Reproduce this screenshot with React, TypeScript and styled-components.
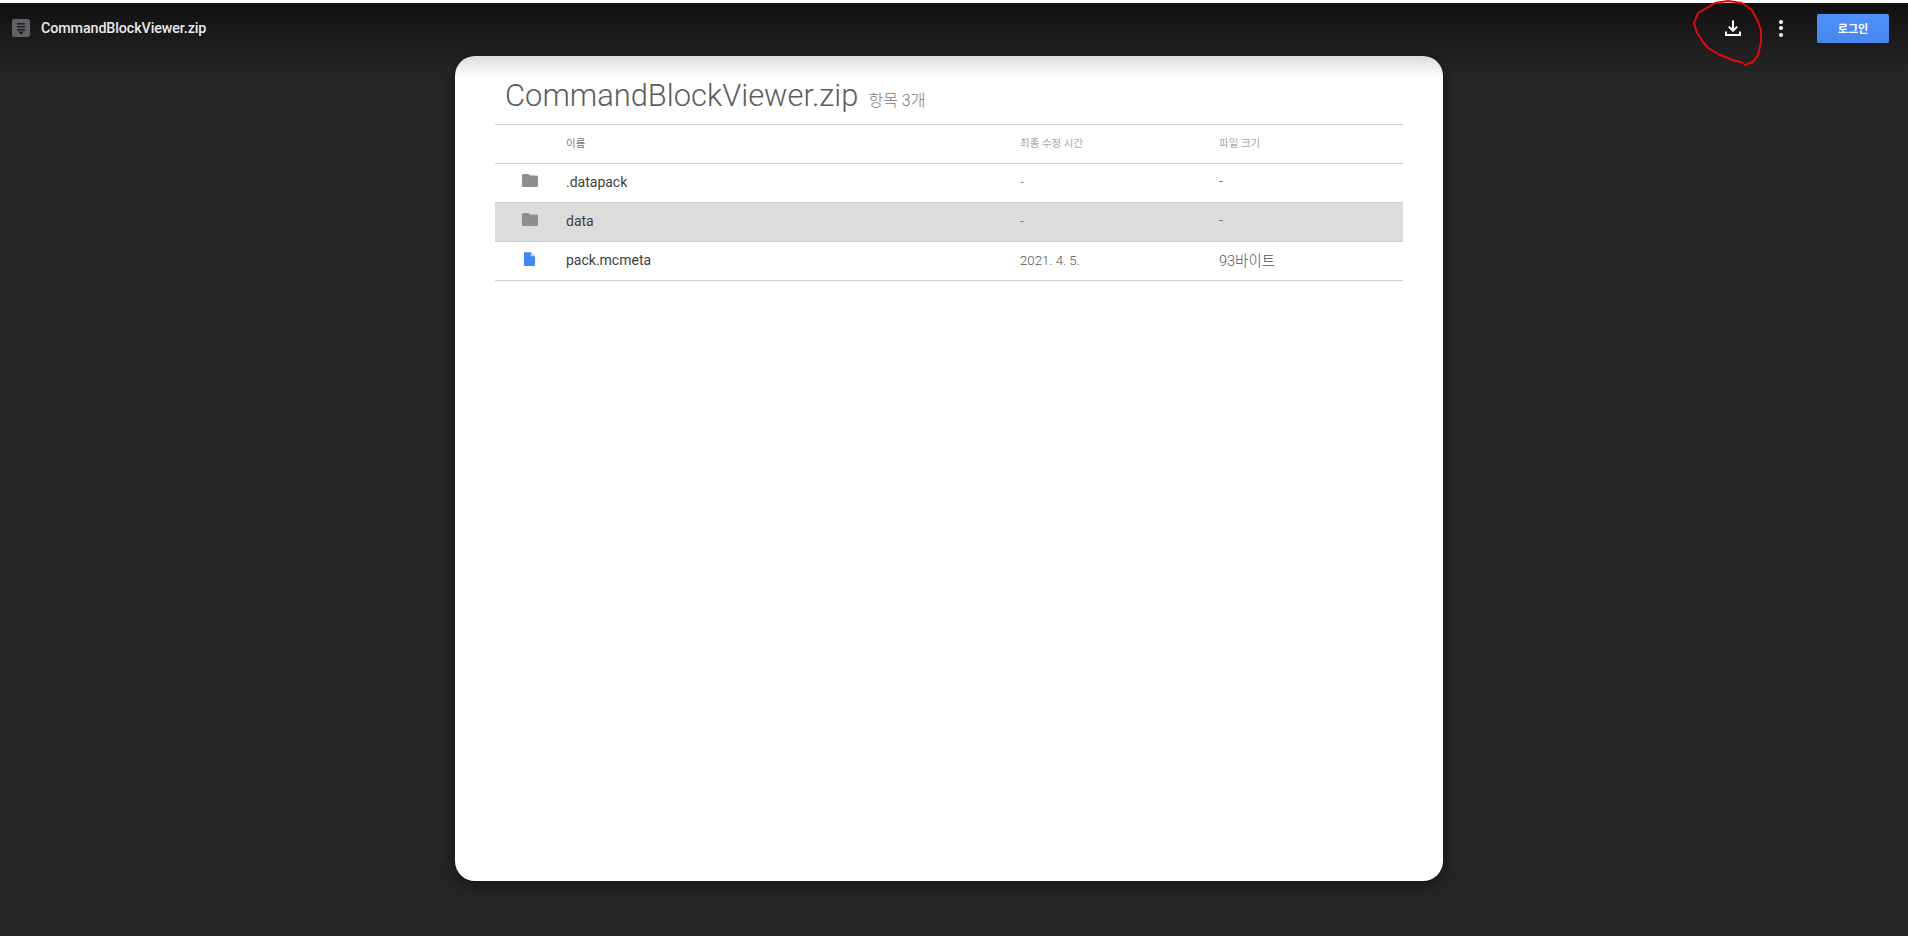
import styled, { createGlobalStyle } from 'styled-components';

const GlobalStyle = createGlobalStyle`
  html, body {
    margin: 0;
    padding: 0;
    height: 100%;
    background: #262626;
    overflow: hidden;
  }
`;

const FONT = `Roboto, "Noto Sans CJK KR", sans-serif`;

const FILES = [
  { name: '.datapack', kind: 'folder', modified: '-', size: '-' },
  { name: 'data', kind: 'folder', modified: '-', size: '-', selected: true },
  { name: 'pack.mcmeta', kind: 'file', modified: '2021. 4. 5.', size: '93바이트' },
];

const App = () => {
  return (
    <>
      <GlobalStyle />
      <Page>
        <TopStrip />
        <Toolbar>
          <ZipIcon viewBox="0 0 18 18">
            <rect width="18" height="18" rx="2.500" fill="#5f6368" />
            <path d="M5 4h8v1.600H5zM5 7h8v1.600H5zM5 10h8v1.600H5zM6 12.600h6L9 15.400z" fill="#1d1d1d" />
          </ZipIcon>
          <ArchiveName>CommandBlockViewer.zip</ArchiveName>
          <Actions>
            <IconButton aria-label="download">
              <svg width="18" height="18" viewBox="0 0 18 18" fill="none">
                <path d="M9 1.500v10M4.800 7.600 9 11.800l4.200-4.200M2 12.500v3.500h14v-3.500" stroke="#fff" strokeWidth="2" />
              </svg>
            </IconButton>
            <MoreButton aria-label="more">
              <Dot />
              <Dot />
              <Dot />
            </MoreButton>
            <LoginButton>로그인</LoginButton>
          </Actions>
          <Scribble viewBox="0 0 248 80" fill="none">
            <path
              d="M82.700 62.700 L73 60 L60 55 L48 48 L43 42 L40 37 L37 33 L34 23 L38 13 L45 9 L55 3 L68 1 L82 3 L92 10 L98 22 L101 30 L101 42 L98 55 L93 62 L85 65"
              stroke="#e60808"
              strokeWidth="2"
              strokeLinecap="round"
              strokeLinejoin="round"
            />
          </Scribble>
        </Toolbar>
        <CardArea>
          <Card>
            <TitleRow>
              <Title>CommandBlockViewer.zip</Title>
              <ItemCount>항목 3개</ItemCount>
            </TitleRow>
            <FileTable>
              <HeadRow>
                <IconCell />
                <NameCell>이름</NameCell>
                <DateCell>최종 수정 시간</DateCell>
                <SizeCell>파일 크기</SizeCell>
              </HeadRow>
              {FILES.map((file) => (
                <FileRow key={file.name} $selected={file.selected}>
                  <IconCell>
                    {file.kind === 'folder' ? (
                      <svg width="16" height="13" viewBox="0 0 16 13">
                        <path d="M6.400 0H1.600C.7 0 0 .7 0 1.600v9.800C0 12.300.7 13 1.600 13h12.800c.9 0 1.600-.7 1.600-1.600V3.200c0-.9-.7-1.600-1.600-1.600H8L6.400 0z" fill="#8f8f8f" />
                      </svg>
                    ) : (
                      <svg width="11" height="14" viewBox="0 0 12 15">
                        <path d="M1 0C.4 0 0 .5 0 1v13c0 .6.4 1 1 1h10c.6 0 1-.4 1-1V4.500L7.500 0H1z" fill="#4285f4" />
                        <path d="M7.500 0v4.500H12z" fill="#c6dafc" />
                      </svg>
                    )}
                  </IconCell>
                  <FileName>{file.name}</FileName>
                  <FileMeta>{file.modified}</FileMeta>
                  <FileSize>{file.size}</FileSize>
                </FileRow>
              ))}
            </FileTable>
          </Card>
        </CardArea>
      </Page>
    </>
  );
};

const Page = styled.div`
  width: 100%;
  height: 936px;
  display: flex;
  flex-direction: column;
  font-family: ${FONT};
  background: linear-gradient(#101010 3px, #262626 72px);
`;

const TopStrip = styled.div`
  height: 3px;
  background: #fff;
`;

const Toolbar = styled.header`
  position: relative;
  height: 53px;
  flex-shrink: 0;
  display: flex;
  align-items: center;
  padding: 0 19px 3px 12px;
  box-sizing: border-box;
`;

const ZipIcon = styled.svg`
  width: 18px;
  height: 18px;
  flex-shrink: 0;
`;

const ArchiveName = styled.div`
  margin-left: 11px;
  font-size: 14.300px;
  font-weight: 500;
  color: #e8eaed;
  letter-spacing: -0.1px;
`;

const Actions = styled.div`
  margin-left: auto;
  display: flex;
  align-items: center;
`;

const IconButton = styled.button`
  width: 24px;
  height: 24px;
  padding: 0;
  border: 0;
  background: none;
  display: flex;
  align-items: center;
  justify-content: center;
`;

const MoreButton = styled(IconButton)`
  flex-direction: column;
  gap: 2.500px;
  margin-left: 24px;
`;

const Dot = styled.span`
  width: 4px;
  height: 4px;
  border-radius: 50%;
  background: #fff;
`;

const LoginButton = styled.button`
  width: 72px;
  height: 29px;
  margin-left: 24px;
  border: 0;
  border-radius: 2px;
  background: linear-gradient(#4d90fe, #4787ed);
  color: #fff;
  font-family: ${FONT};
  font-size: 11px;
  font-weight: 700;
`;

const Scribble = styled.svg`
  position: absolute;
  left: 1660px;
  top: -3px;
  width: 248px;
  height: 80px;
  pointer-events: none;
`;

const CardArea = styled.div`
  display: flex;
  justify-content: center;
  padding-right: 10px;
`;

const Card = styled.main`
  width: 988px;
  height: 825px;
  padding: 0 40px;
  box-sizing: border-box;
  border-radius: 20px;
  background: linear-gradient(#dcdcdc 0, #ffffff 22px);
  box-shadow: 0 4px 16px rgba(0, 0, 0, 0.5);
`;

const TitleRow = styled.div`
  height: 68px;
  padding: 22px 0 0 10px;
  box-sizing: border-box;
  display: flex;
  align-items: baseline;
`;

const Title = styled.h1`
  margin: 0;
  font-size: 30.900px;
  font-weight: 300;
  line-height: 36px;
  color: #5c5c5c;
`;

const ItemCount = styled.span`
  margin-left: 10px;
  font-size: 16px;
  font-weight: 300;
  color: #777;
`;

const FileTable = styled.div`
  border-top: 1px solid #cfcfcf;
`;

const HeadRow = styled.div`
  height: 39px;
  padding-bottom: 4px;
  box-sizing: border-box;
  display: flex;
  align-items: center;
  border-bottom: 1px solid #cfcfcf;
  font-size: 10.500px;
  color: #a8a8a8;
`;

const FileRow = styled(HeadRow)<{ $selected?: boolean }>`
  padding-bottom: 2px;
  background: ${({ $selected }) => ($selected ? '#dcdcdc' : 'transparent')};
  font-size: 14px;
  color: #333;
`;

const IconCell = styled.div`
  flex: 0 0 71px;
  display: flex;
  justify-content: center;
  padding: 0 2px 3px 0;
  box-sizing: border-box;
`;

const NameCell = styled.div`
  flex: 0 0 454px;
  color: #777;
`;

const DateCell = styled.div`
  flex: 0 0 199px;
`;

const SizeCell = styled.div`
  flex: 1;
`;

const FileName = styled(NameCell)`
  color: #3c4043;
`;

const FileMeta = styled(DateCell)`
  font-size: 13.200px;
  font-weight: 300;
  color: #555;
`;

const FileSize = styled(SizeCell)`
  font-size: 14.500px;
  font-weight: 300;
  color: #555;
  padding-bottom: 1px;
`;

export default App;
